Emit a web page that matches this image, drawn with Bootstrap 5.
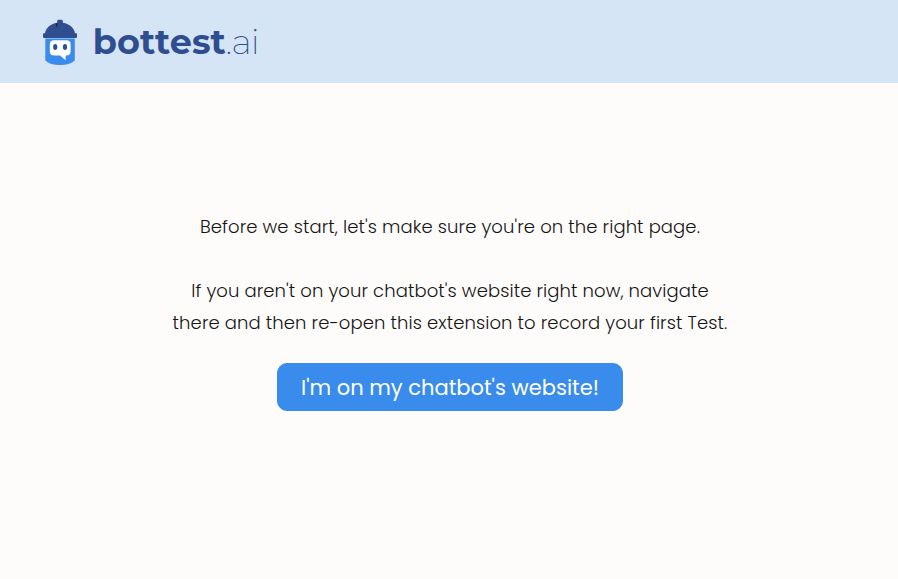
<!DOCTYPE html>
<html lang="en">
<head>
<meta charset="utf-8">
<meta name="viewport" content="width=device-width, initial-scale=1">
<title>bottest.ai</title>
<link href="https://cdn.jsdelivr.net/npm/bootstrap@5.3.0/dist/css/bootstrap.min.css" rel="stylesheet">
<style>
body { background: #fefcfb; font-family: Poppins, Inter, "Open Sans", sans-serif; color: #151515; }
.top-bar { background: #d6e5f6; height: 83px; padding: 0 0 0 36px; }
.intro { font-size: 18px; line-height: 32px; font-weight: 300; white-space: nowrap; letter-spacing: .09px; padding: 128px 0 0 2px; }
.btn-go { --bs-btn-bg: #398bec; --bs-btn-border-color: #398bec; --bs-btn-hover-bg: #2e7bd8; width: 346px; height: 48px; border-radius: 10px; font-size: 21px; line-height: 32px; padding: 1px 0 0; margin: 24px 0 0 2px; white-space: nowrap; }
</style>
</head>
<body class="vh-100 d-flex flex-column overflow-hidden">
<header class="top-bar navbar d-flex align-items-center">
  <a class="navbar-brand p-0 m-0 d-flex" href="#" aria-label="bottest.ai">
    <svg width="234" height="59" viewBox="36 12 234 59">
      <path d="M45.3 38.5H74.8V60.5Q70 65 60 65Q50 65 45.3 60.5Z" fill="#398bec"/>
      <path d="M45 33.3C46 28 50 24 57.2 22.8V21Q57.2 19.8 58.4 19.8H61.6Q62.8 19.8 62.8 21V22.8C70 24 74 28 75 33.3H76Q77 33.3 77 34.3V37Q77 38 76 38H44Q43 38 43 37V34.3Q43 33.3 44 33.3Z" fill="#2f4e90"/>
      <path d="M55.8 23.2H57.3L57 28Z" fill="#101828"/>
      <path d="M54 40.2H66.5Q70.6 40.2 70.6 44.2V51.5Q70.6 55.5 66.3 55.5H65.6V60.2L60 55.5H54Q49.8 55.5 49.8 51.5V44.2Q49.8 40.2 54 40.2Z" fill="#fff"/>
      <ellipse cx="55.2" cy="47" rx="2.1" ry="3" fill="#2f4e90"/>
      <ellipse cx="65" cy="47" rx="2.1" ry="3" fill="#2f4e90"/>
      <text x="92.8" y="54" font-family="Montserrat, Inter, sans-serif" font-size="35" font-weight="700" fill="#2f4e90" textLength="133">bottest</text>
      <text x="225.6" y="54" font-family="Montserrat, Lato, sans-serif" font-size="35" font-weight="200" fill="#2f4e90" textLength="34">.ai</text>
    </svg>
  </a>
</header>
<main class="flex-grow-1 d-flex flex-column align-items-center text-center">
  <div class="intro">
    <p class="mb-0">Before we start, let's make sure you're on the right page.</p>
    <p class="mb-0 mt-4 pt-2">If you aren't on your chatbot's website right now, navigate<br>there and then re-open this extension to record your first Test.</p>
  </div>
  <button type="button" class="btn btn-primary btn-go">I'm on my chatbot's website!</button>
</main>
<script src="https://cdn.jsdelivr.net/npm/bootstrap@5.3.0/dist/js/bootstrap.bundle.min.js"></script>
</body>
</html>
